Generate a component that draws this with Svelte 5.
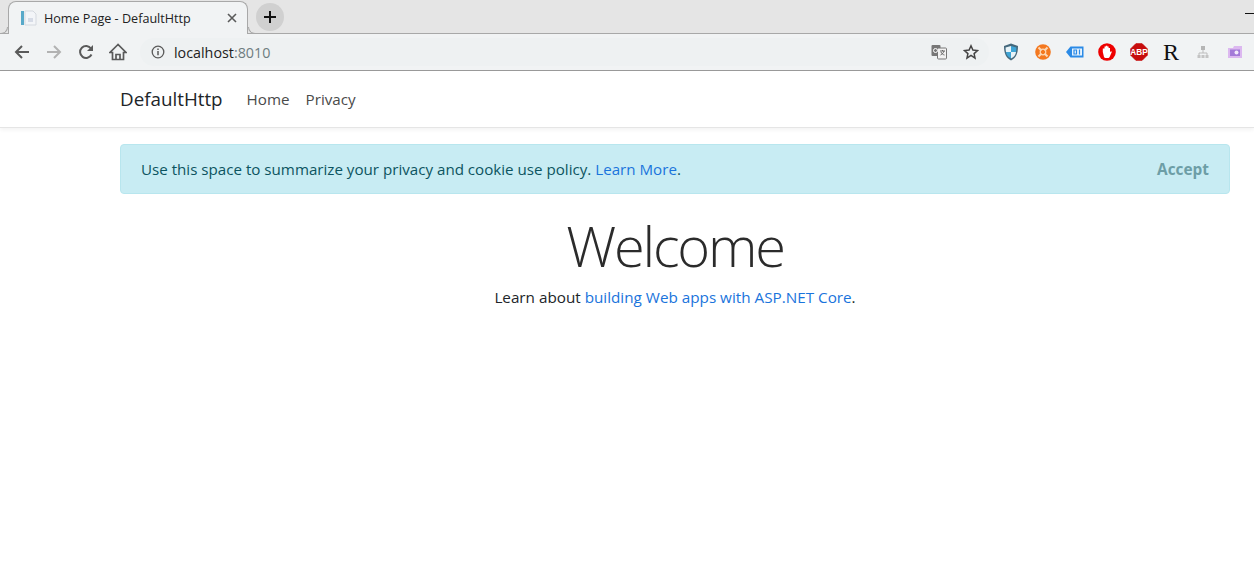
<script lang="ts">
  const exts = ['shield', 'orange', 'tag', 'stop', 'abp', 'r', 'tree', 'purple']
</script>

<div class="chrome">
  <div class="tabstrip">
    <div class="tab">
      <svg class="favicon" width="16" height="16" viewBox="0 0 16 16">
        <rect x="0" y="1" width="3" height="14" fill="#58a9c9" />
        <path d="M4 1h8l3 3v11H4z" fill="#f3f5f8" stroke="#d5d9df" />
        <rect x="7" y="8" width="5" height="4" fill="#d6dbe6" />
      </svg>
      <span class="tabtitle">Home Page - DefaultHttp</span>
      <svg class="tabclose" width="10" height="10" viewBox="0 0 10 10">
        <path d="M1 1l8 8M9 1l-8 8" stroke="#5a5a5a" stroke-width="1.6" />
      </svg>
    </div>
    <div class="newtab">
      <svg width="12" height="12" viewBox="0 0 12 12">
        <path d="M6 0v12M0 6h12" stroke="#111" stroke-width="2" />
      </svg>
    </div>
    <div class="minimize"></div>
  </div>
  <div class="toolbar">
    <svg class="navicon" width="16" height="16" viewBox="0 0 16 16">
      <path d="M15 8H2M8 2L2 8l6 6" fill="none" stroke="#5a5a5a" stroke-width="2" />
    </svg>
    <svg class="navicon" width="16" height="16" viewBox="0 0 16 16">
      <path d="M1 8h13M8 2l6 6-6 6" fill="none" stroke="#b2b2b2" stroke-width="2" />
    </svg>
    <svg class="navicon" width="16" height="16" viewBox="0 0 16 16">
      <path d="M13.5 10.500A6 6 0 1 1 13 4.500" fill="none" stroke="#5a5a5a" stroke-width="2" />
      <path d="M15 1v6H9z" fill="#5a5a5a" />
    </svg>
    <svg class="navicon" width="18" height="18" viewBox="0 0 18 18">
      <path d="M9 1.500L1 9.500h2.500V16.500h11V9.500H17zM7 16.500v-5h4v5" fill="none" stroke="#5a5a5a" stroke-width="1.700" />
    </svg>
    <div class="omnibox">
      <svg width="14" height="14" viewBox="0 0 14 14">
        <circle cx="7" cy="7" r="5.800" fill="none" stroke="#5a5a5a" stroke-width="1.300" />
        <path d="M7 6v4.200M7 3.500v1.500" stroke="#5a5a5a" stroke-width="1.500" />
      </svg>
      <span class="url">localhost<span class="port">:8010</span></span>
      <span class="spacer"></span>
      <svg width="16" height="16" viewBox="0 0 16 16">
        <rect x="0.500" y="1" width="9" height="11" rx="1" fill="#777" />
        <rect x="6.500" y="4" width="9" height="11" rx="1" fill="#f2f2f2" stroke="#777" />
        <path d="M9 7h5M11.500 6v1M13 7c-.5 2-2 3.500-3.500 4M10 8c.5 1.500 2 2.700 3.500 3" fill="none" stroke="#666" />
        <circle cx="4.500" cy="6.500" r="2" fill="none" stroke="#fff" />
      </svg>
      <svg class="star" width="16" height="16" viewBox="0 0 16 16">
        <path d="M8 1.800l1.900 4.200 4.600.5-3.400 3.100.9 4.500L8 11.300l-4 2.800.9-4.500L1.500 6.500l4.600-.5z" fill="none" stroke="#444" stroke-width="1.500" />
      </svg>
    </div>
    <div class="extensions">
      {#each exts as ext}
        <span class="ext">
          {#if ext === 'shield'}
            <svg width="16" height="18" viewBox="0 0 16 18">
              <path d="M8 .5l7 2.500c0 7-1.500 11.500-7 14.500-5.500-3-7-7.500-7-14.500z" fill="#46697d" />
              <path d="M8 3v6H3c.3 3 1.800 5 5 6.500V9h5c.3-1.500.4-3 .4-4.500z" fill="#3fa5d6" />
              <path d="M8 3L2.600 4.500c0 1.600 .1 3.100 .4 4.500h5zM8 9v6.500c3.200-1.500 4.700-3.500 5-6.500z" fill="#e8f3f8" />
            </svg>
          {:else if ext === 'orange'}
            <svg width="16" height="16" viewBox="0 0 16 16">
              <circle cx="8" cy="8" r="7.800" fill="#f4781f" />
              <circle cx="8" cy="8" r="2.800" fill="none" stroke="#fbd7b5" stroke-width="1.200" />
              <path d="M3.500 3.500l3 3M12.500 3.500l-3 3M3.500 12.500l3-3M12.500 12.500l-3-3" stroke="#fbd7b5" stroke-width="2" />
            </svg>
          {:else if ext === 'tag'}
            <svg width="18" height="16" viewBox="0 0 18 16">
              <path d="M0 8l4.500-5.500h13v11h-13z" fill="#2b8ae6" />
              <rect x="6" y="4.500" width="10" height="7" fill="#e8f3fd" />
              <path d="M8 6h2.500v4H8zM13.500 5.500v5" fill="none" stroke="#2b8ae6" stroke-width="1.200" />
            </svg>
          {:else if ext === 'stop'}
            <svg width="18" height="18" viewBox="0 0 18 18">
              <circle cx="9" cy="9" r="8.800" fill="#ee0000" />
              <path d="M4.800 9V5.500h1.700V3.500h1.300V2.800h1.500v.7h1.300v1.500h1.400v4.200l.9-1 1 .6-2.300 5.200c-.3.600-.8.900-1.400.9H7.500c-.7 0-1.100-.3-1.500-.9z" fill="#fff" />
            </svg>
          {:else if ext === 'abp'}
            <svg width="18" height="18" viewBox="0 0 18 18">
              <path d="M5.800 .8h6.400l5 5v6.400l-5 5H5.800l-5-5V5.800z" fill="#c70d0d" stroke="#c70d0d" stroke-linejoin="round" />
              <text x="9" y="12.300" class="abptext" text-anchor="middle">ABP</text>
            </svg>
          {:else if ext === 'r'}
            <span class="rglyph">R</span>
          {:else if ext === 'tree'}
            <svg width="16" height="16" viewBox="0 0 16 16">
              <rect x="6" y="2" width="4" height="4" fill="#b5b5b5" />
              <path d="M8 6v3M4 12V9h8v3" fill="none" stroke="#bdbdbd" />
              <rect x="2.500" y="11" width="3" height="3" fill="#c4c4c4" />
              <rect x="6.500" y="11" width="3" height="3" fill="#c4c4c4" />
              <rect x="10.500" y="11" width="3" height="3" fill="#c4c4c4" />
            </svg>
          {:else}
            <svg width="16" height="16" viewBox="0 0 16 16">
              <path d="M1 4h5l1-2h8v12H1z" fill="#dcb8f0" />
              <rect x="3" y="5.500" width="10" height="6.500" fill="#a47ad8" />
              <circle cx="9.500" cy="8.500" r="2" fill="#f3e9fb" />
            </svg>
          {/if}
        </span>
      {/each}
    </div>
  </div>
</div>

<nav class="navbar">
  <a class="brand" href="#home">DefaultHttp</a>
  <a class="navlink" href="#home">Home</a>
  <a class="navlink" href="#privacy">Privacy</a>
</nav>

<main class="container">
  <div class="alert">
    <span>Use this space to summarize your privacy and cookie use policy. <a href="#privacy">Learn More</a>.</span>
    <button class="accept">Accept</button>
  </div>
  <div class="welcome">
    <h1>Welcome</h1>
    <p>Learn about <a href="#docs">building Web apps with ASP.NET Core</a>.</p>
  </div>
</main>

<style>
  :global(body) {
    background: #fff;
    font-family: "Open Sans", "Noto Sans", sans-serif;
    color: #212529;
  }
  .chrome {
    height: 71px;
    background: #f1f3f4;
    border-bottom: 1px solid #9a9a9a;
    box-sizing: border-box;
  }
  .tabstrip {
    height: 34px;
    box-sizing: border-box;
    background: #e5e5e5;
    border-bottom: 1px solid #a8a8a8;
    display: flex;
    padding-left: 8px;
    padding-top: 1px;
    position: relative;
  }
  .tab {
    position: relative;
    width: 240px;
    height: 33px;
    box-sizing: border-box;
    background: #f1f3f4;
    border: 1px solid #a8a8a8;
    border-bottom: none;
    border-radius: 8px 8px 0 0;
    display: flex;
    align-items: center;
    padding: 0 10px 0 12px;
  }
  .tab::before,
  .tab::after {
    content: "";
    position: absolute;
    bottom: 0;
    width: 7px;
    height: 7px;
    box-sizing: border-box;
    border-bottom: 1px solid #a8a8a8;
  }
  .tab::before {
    left: -8px;
    border-right: 1px solid #a8a8a8;
    border-bottom-right-radius: 7px;
  }
  .tab::after {
    right: -8px;
    border-left: 1px solid #a8a8a8;
    border-bottom-left-radius: 7px;
  }
  .favicon {
    margin-right: 7px;
  }
  .tabtitle {
    flex: 1;
    font: 12.6px "Open Sans", sans-serif;
    color: #222;
  }
  .newtab {
    width: 28px;
    height: 28px;
    border-radius: 50%;
    background: #d0d0d0;
    display: grid;
    place-items: center;
    margin: 2px 0 0 8px;
  }
  .minimize {
    position: absolute;
    right: 0;
    top: 13px;
    width: 9px;
    height: 1px;
    background: #111;
  }
  .toolbar {
    height: 36px;
    display: flex;
    align-items: center;
    padding-left: 14px;
  }
  .navicon {
    margin-right: 16px;
  }
  .navicon:nth-child(4) {
    margin-left: -1px;
    margin-right: 13px;
  }
  .omnibox {
    width: 849px;
    height: 28px;
    box-sizing: border-box;
    background: #eef1f2;
    border-radius: 14px;
    display: flex;
    align-items: center;
    padding: 0 10px 0 11px;
    gap: 9px;
  }
  .url {
    font: 14.3px "Open Sans", sans-serif;
    color: #222;
  }
  .port {
    color: #6f7d80;
  }
  .spacer {
    flex: 1;
  }
  .star {
    margin-left: 7px;
  }
  .extensions {
    display: flex;
    align-items: center;
    margin-left: 6px;
  }
  .ext {
    width: 32px;
    display: grid;
    place-items: center;
  }
  .abptext {
    font: 700 8.2px "Liberation Sans", sans-serif;
    fill: #fff;
  }
  .rglyph {
    font: 400 24px "Liberation Serif", serif;
    line-height: 20px;
    color: #111;
  }
  .navbar {
    height: 57px;
    box-sizing: border-box;
    border-bottom: 1px solid #e5e5e5;
    box-shadow: 0 2px 4px rgba(0, 0, 0, 0.05);
    display: flex;
    align-items: center;
    padding-left: 120px;
  }
  .brand {
    font-size: 18.8px;
    color: #212529;
    text-decoration: none;
    margin-right: 24px;
  }
  .navlink {
    font-size: 15.2px;
    color: #4a4a4a;
    text-decoration: none;
    margin-right: 16px;
  }
  .container {
    padding: 16px 24px 0 120px;
  }
  .alert {
    height: 50px;
    box-sizing: border-box;
    background: #c8ecf3;
    border: 1px solid #b8e6ee;
    border-radius: 4px;
    color: #0c5460;
    font-size: 15.15px;
    display: flex;
    align-items: center;
    justify-content: space-between;
    padding: 0 20px;
  }
  .alert a {
    color: #1a74dc;
    text-decoration: none;
  }
  .accept {
    border: none;
    background: none;
    font: 700 15.4px "Open Sans", sans-serif;
    color: #6d9ea6;
    padding: 0;
  }
  .welcome {
    text-align: center;
  }
  h1 {
    font-size: 56px;
    font-weight: 300;
    letter-spacing: -2.2px;
    line-height: 67px;
    margin: 18px 0 8px;
    color: #2b2b2b;
  }
  p {
    margin: 0;
    font-size: 15.25px;
  }
  p a {
    color: #1a74dc;
    text-decoration: none;
  }
</style>
